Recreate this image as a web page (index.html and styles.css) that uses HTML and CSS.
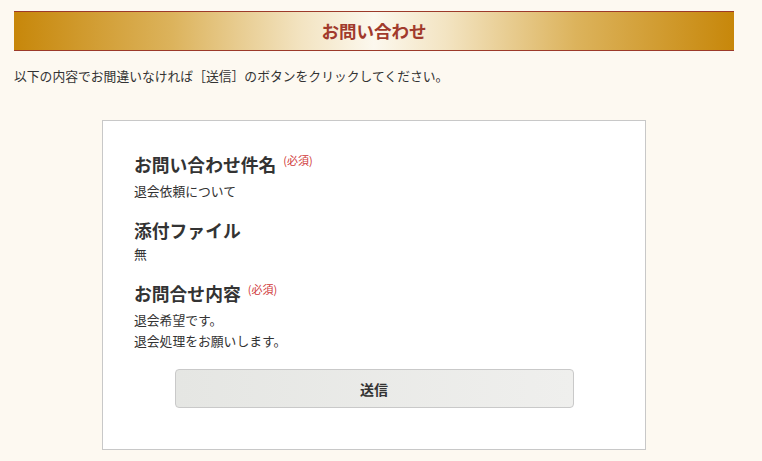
FILE: index.html
```html
<!DOCTYPE html>
<html lang="ja">
<head>
    <meta charset="UTF-8">
    <meta name="viewport" content="width=device-width, initial-scale=1.0">
    <title>お問い合わせ</title>
    <link rel="stylesheet" href="styles.css">
</head>
<body>
    <section class="contact">
        <h1 class="contact-title">お問い合わせ</h1>
        <p class="lead">以下の内容でお間違いなければ［送信］のボタンをクリックしてください。</p>

        <!-- 確認内容 -->
        <div class="confirm-box">
            <dl class="confirm-list">
                <dt>お問い合わせ件名<span class="required">(必須)</span></dt>
                <dd>退会依頼について</dd>

                <dt>添付ファイル</dt>
                <dd>無</dd>

                <dt>お問合せ内容<span class="required">(必須)</span></dt>
                <dd>退会希望です。<br>退会処理をお願いします。</dd>
            </dl>

            <button type="button" class="submit-button">送信</button>
        </div>
    </section>
</body>
</html>
```

FILE: styles.css
```css
body {
    font-family: "Noto Sans CJK JP", "Noto Sans", sans-serif;
    margin: 0;
    padding: 0;
    background-color: #fdf9f1;
    color: #333;
}

.contact {
    width: 720px;
    margin: 0 0 0 14px;
    padding-top: 11px;
}

.contact-title {
    margin: 0;
    height: 38px;
    line-height: 38px;
    text-align: center;
    font-size: 17.5px;
    font-weight: bold;
    color: #a13a2c;
    border-top: 1px solid #9c3a2a;
    border-bottom: 1px solid #9c3a2a;
    background: linear-gradient(to right, #c7870a 0%, #dcb35c 22%, #f3e4c2 40%, #fcf8ee 50%, #f3e4c2 60%, #dcb35c 78%, #c7870a 100%);
}

.lead {
    margin: 15px 0 0;
    font-size: 12.8px;
    line-height: 20px;
    color: #333;
}

.confirm-box {
    width: 480px;
    margin: 34px 0 0 88px;
    padding: 31px 31px 41px;
    background: #fff;
    border: 1px solid #c8c8c8;
}

.confirm-list {
    margin: 0;
}

.confirm-list dt {
    font-size: 17.8px;
    line-height: 24px;
    font-weight: bold;
    color: #333;
    margin-top: 17px;
}

.confirm-list dt:first-child {
    margin-top: 0;
}

.confirm-list dd {
    margin: 1px 0 0;
    font-size: 12.8px;
    line-height: 21px;
    color: #333;
}

.required {
    position: relative;
    top: -7px;
    margin-left: 7px;
    font-size: 11px;
    font-weight: normal;
    color: #d03a3a;
}

.submit-button {
    display: block;
    width: 399px;
    height: 39px;
    margin: 18px auto 0;
    font-family: inherit;
    font-size: 14px;
    font-weight: bold;
    color: #333;
    background: linear-gradient(to right, #e5e6e3, #efefed);
    border: 1px solid #c9c9c9;
    border-radius: 4px;
    cursor: pointer;
}
```
